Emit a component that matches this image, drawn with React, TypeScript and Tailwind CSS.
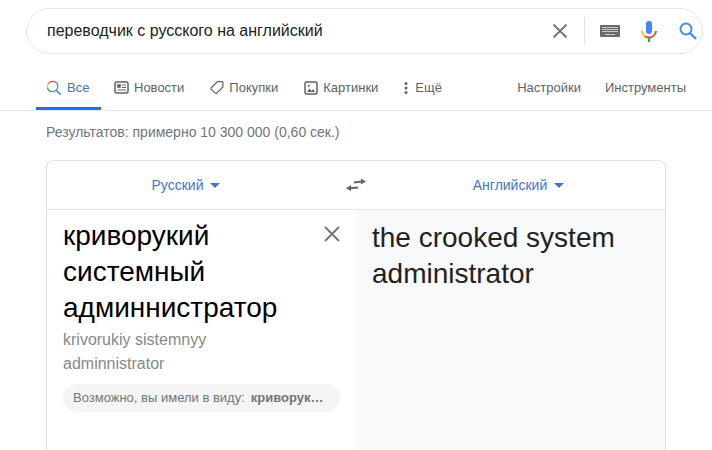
import React from "react";

function SearchG() {
  return (
    <svg width="16" height="16" viewBox="0 0 16 16" fill="none" strokeWidth="1.3">
      <path d="M10.6 3A5.3 5.3 0 0 0 2.4 3.6" stroke="#ea4335" />
      <path d="M2.4 3.6A5.3 5.3 0 0 0 1.5 8" stroke="#fbbc05" />
      <path d="M1.5 8A5.3 5.3 0 0 0 6.2 11.7" stroke="#34a853" />
      <path d="M6.2 11.7A5.3 5.3 0 0 0 11 9" stroke="#4285f4" />
      <path d="M11 9A5.3 5.3 0 0 0 10.6 3" stroke="#4285f4" />
      <path d="M10.2 10.2l4.6 4.6" stroke="#4285f4" strokeWidth="1.5" />
    </svg>
  );
}

function Caret({ color = "#4374cf" }: { color?: string }) {
  return (
    <svg width="10" height="5" viewBox="0 0 10 5">
      <path d="M0 0h10L5 5z" fill={color} />
    </svg>
  );
}

function Tab({ icon, label, active }: { icon: React.ReactNode; label: string; active?: boolean }) {
  return (
    <div
      className={
        "flex h-[41px] items-center gap-[5px] border-b-[3px] pb-[1px] " +
        (active ? "border-[#1a73e8] text-[#4374cf]" : "border-transparent text-[#5f6368]")
      }
    >
      {icon}
      <span>{label}</span>
    </div>
  );
}

export default function App() {
  return (
    <div className="h-[450px] w-[712px] overflow-hidden bg-white font-['Liberation_Sans',Arial,sans-serif]">
      <div className="pt-2 pr-[9px] pl-[26px]">
        <div className="flex h-[46px] items-center rounded-[23px] border border-[#e4e4e4] pr-[5px] pl-[20px]">
          <div className="flex-1 text-base text-[#222]">переводчик с русского на английский</div>
          <svg width="16" height="16" viewBox="0 0 16 16" className="mr-[16px]">
            <path d="M1.5 1.5l13 13M14.5 1.5l-13 13" stroke="#70757a" strokeWidth="1.9" />
          </svg>
          <div className="mr-[15px] h-[28px] w-px bg-[#dfe1e5]" />
          <svg width="20" height="12" viewBox="0 0 20 12" className="mr-[21px]">
            <rect width="20" height="12" rx="1" fill="#6a6a6a" />
            <g fill="#c8c8c8">
              <rect x="2" y="2" width="16" height="1" />
              <rect x="2" y="4" width="16" height="1" />
              <rect x="2" y="6" width="16" height="1" />
              <rect x="5" y="9" width="10" height="1" />
            </g>
          </svg>
          <svg width="16" height="21" viewBox="0 0 16 21" className="mr-[22px]">
            <rect x="5" y="0" width="6" height="13" rx="3" fill="#4285f4" />
            <path d="M1 10a7 7 0 0 0 3 5.2" fill="none" stroke="#fbbc05" strokeWidth="2" />
            <path d="M4 15.2a7 7 0 0 0 8 0" fill="none" stroke="#ea4335" strokeWidth="2" />
            <path d="M12 15.2a7 7 0 0 0 3-5.2" fill="none" stroke="#ea4335" strokeWidth="2" />
            <rect x="7" y="17" width="2" height="4" fill="#34a853" />
          </svg>
          <svg width="18" height="18" viewBox="0 0 18 18" fill="none" stroke="#4285f4">
            <circle cx="7" cy="7" r="5.5" strokeWidth="1.9" />
            <path d="M11 11l6 6" strokeWidth="2.2" />
          </svg>
        </div>
      </div>

      <div className="mt-[15px] flex h-[42px] items-center border-b border-[#e8e8e8] pr-[26px] pl-[36px] text-[13px] leading-none">
        <div className="w-[65px]">
          <Tab
            active
            icon={
              <span className="ml-[10px]">
                <SearchG />
              </span>
            }
            label="Все"
          />
        </div>
        <div className="ml-[13px]">
          <Tab
            icon={
              <svg width="15" height="13" viewBox="0 0 15 13" fill="none" stroke="#5f6368">
                <rect x="1" y="1" width="13" height="11" rx="1.5" strokeWidth="1.5" />
                <rect x="3.5" y="3.5" width="3" height="3" fill="#5f6368" strokeWidth="0.6" />
                <path d="M8 4h4M8 6.5h4M3.5 9h8.5" strokeWidth="1.1" />
              </svg>
            }
            label="Новости"
          />
        </div>
        <div className="ml-[26px]">
          <Tab
            icon={
              <svg width="14" height="15" viewBox="0 0 15 15" fill="none" stroke="#5f6368" strokeWidth="1.3">
                <path d="M8 1.2h5a.8.8 0 0 1 .8.8v5L7 13.8a.9.9 0 0 1-1.2 0L1.2 9.2a.9.9 0 0 1 0-1.2z" />
              </svg>
            }
            label="Покупки"
          />
        </div>
        <div className="ml-[26px]">
          <Tab
            icon={
              <svg width="14" height="14" viewBox="0 0 14 14" fill="none" stroke="#5f6368">
                <rect x="1" y="1" width="12" height="12" rx="1.5" strokeWidth="1.5" />
                <path d="M3 11l2.5-3.5L7.5 10 9 8l2 3z" fill="#5f6368" stroke="none" />
                <circle cx="4.8" cy="4.8" r="1" fill="#5f6368" stroke="none" />
              </svg>
            }
            label="Картинки"
          />
        </div>
        <div className="ml-[26px]">
          <Tab
            icon={
              <svg width="4" height="14" viewBox="0 0 4 14" fill="#5f6368" className="mr-[2px]">
                <circle cx="2" cy="2.5" r="1.5" />
                <circle cx="2" cy="7" r="1.5" />
                <circle cx="2" cy="11.5" r="1.5" />
              </svg>
            }
            label="Ещё"
          />
        </div>
        <div className="ml-auto flex h-[41px] items-center gap-[24px] pb-[4px] text-[#5f6368]">
          <span>Настройки</span>
          <span>Инструменты</span>
        </div>
      </div>

      <div className="mt-[12px] pl-[46px] text-sm leading-[18px] text-[#70757a]">
        Результатов: примерно 10 300 000 (0,60 сек.)
      </div>

      <div className="mt-[19px] ml-[46px] w-[620px] rounded-t-lg border border-b-0 border-[#e0e0e0]">
        <div className="flex h-[49px] items-center border-b border-[#e4e4e4] text-sm text-[#4374cf]">
          <div className="flex w-[278px] items-center justify-center gap-[7px]">
            <span>Русский</span>
            <Caret />
          </div>
          <svg width="20" height="14" viewBox="0 0 20 14" className="ml-[21px]">
            <path d="M8 4.4 L16 3.6" stroke="#666" strokeWidth="2" />
            <path d="M15 0.4 L20 3.4 15 6.4z" fill="#666" />
            <path d="M4 10.2 L12 9.4" stroke="#666" strokeWidth="2" />
            <path d="M5 7 L0 10.2 5 13.2z" fill="#666" />
          </svg>
          <div className="flex flex-1 items-center justify-center gap-[7px] pl-[6px]">
            <span>Английский</span>
            <Caret />
          </div>
        </div>
        <div className="flex h-[300px]">
          <div className="w-[309px] pt-[8px] pr-[16px] pl-[16px]">
            <div className="flex">
              <div className="w-[245px] shrink-0 text-[28px] leading-[36px] text-black">
                <div>криворукий</div>
                <div>системный</div>
                <div>админнистратор</div>
              </div>
              <svg width="16" height="16" viewBox="0 0 16 16" className="mt-[8px] ml-[16px]">
                <path d="M1 1l14 14M15 1L1 15" stroke="#70757a" strokeWidth="1.9" />
              </svg>
            </div>
            <div className="mt-[2px] text-base leading-[24px] text-[#878787]">
              <div>krivorukiy sistemnyy</div>
              <div>adminnistrator</div>
            </div>
            <div className="mt-[8px] flex h-[28px] w-[277px] items-center rounded-[14px] bg-[#f5f5f5] px-[10px] text-[13px] whitespace-nowrap text-[#70757a]">
              <span>Возможно, вы имели в виду:</span>
              <span className="ml-[6px] font-bold">криворук…</span>
            </div>
          </div>
          <div className="flex-1 bg-[#f8f9fa] pt-[10px] pl-[16px] text-[28px] leading-[36px] text-[#222]">
            <div>the crooked system</div>
            <div>administrator</div>
          </div>
        </div>
      </div>
    </div>
  );
}
